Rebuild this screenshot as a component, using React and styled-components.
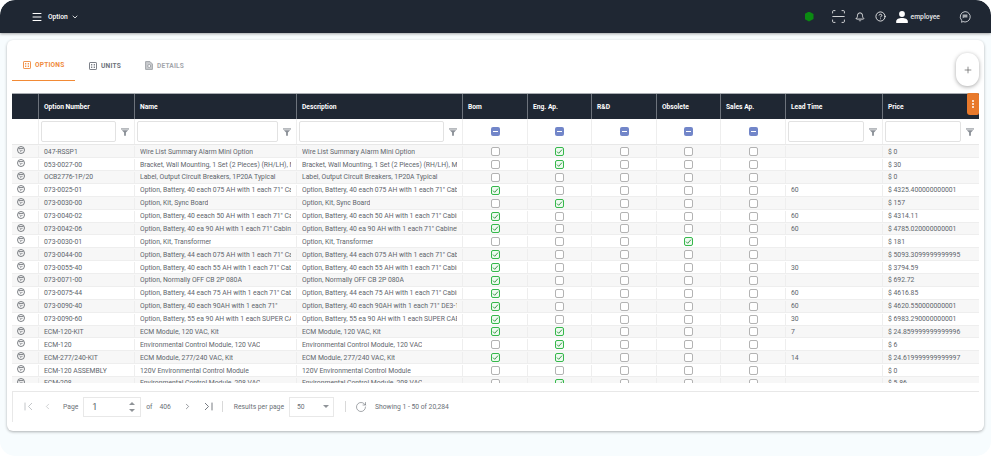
import styled, { createGlobalStyle } from "styled-components";
import { Bell, ChevronDown, ChevronLeft, ChevronRight, CircleHelp, Menu, Plus, RotateCw } from "lucide-react";

const COLUMNS = "26px 96px 162px 166px 65px 64px 65px 64px 65px 97px 97px";

const rows = [
    { num: "047-RSSP1", name: "Wire List Summary Alarm Mini Option", eng: true, price: "0" },
    { num: "053-0027-00", name: "Bracket, Wall Mounting, 1 Set (2 Pieces) (RH/LH), Mini", eng: true, price: "30" },
    { num: "OCB2776-1P/20", name: "Label, Output Circuit Breakers, 1P20A Typical", price: "0" },
    { num: "073-0025-01", name: 'Option, Battery, 40 each 075 AH with 1 each 71" Cabinet', bom: true, lead: "60", price: "4325.400000000001" },
    { num: "073-0030-00", name: "Option, Kit, Sync Board", eng: true, price: "157" },
    { num: "073-0040-02", name: 'Option, Battery, 40 eeach 50 AH with 1 each 71" Cabinet', desc: 'Option, Battery, 40 each 50 AH with 1 each 71" Cabinet', bom: true, lead: "60", price: "4314.11" },
    { num: "073-0042-06", name: 'Option, Battery, 40 ea 90 AH with 1 each 71" Cabinet', bom: true, lead: "60", price: "4785.020000000001" },
    { num: "073-0030-01", name: "Option, Kit, Transformer", obsolete: true, price: "181" },
    { num: "073-0044-00", name: 'Option, Battery, 44 each 075 AH with 1 each 71" Cabinet', bom: true, price: "5093.3099999999995" },
    { num: "073-0055-40", name: 'Option, Battery, 40 each 55 AH with 1 each 71" Cabinet', bom: true, lead: "30", price: "3794.59" },
    { num: "073-0071-00", name: "Option, Normally OFF CB 2P 080A", bom: true, price: "692.72" },
    { num: "073-0075-44", name: 'Option, Battery, 44 each 75 AH with 1 each 71" Cabinet', bom: true, lead: "60", price: "4616.85" },
    { num: "073-0090-40", name: 'Option, Battery, 40 each 90AH with 1 each 71"', desc: 'Option, Battery, 40 each 90AH with 1 each 71" DE3-1', bom: true, lead: "60", price: "4620.550000000001" },
    { num: "073-0090-60", name: 'Option, Battery, 55 ea 90 AH with 1 each SUPER CAB', bom: true, lead: "30", price: "6983.290000000001" },
    { num: "ECM-120-KIT", name: "ECM Module, 120 VAC, Kit", bom: true, eng: true, lead: "7", price: "24.859999999999996" },
    { num: "ECM-120", name: "Environmental Control Module, 120 VAC", eng: true, price: "6" },
    { num: "ECM-277/240-KIT", name: "ECM Module, 277/240 VAC, Kit", bom: true, eng: true, lead: "14", price: "24.619999999999997" },
    { num: "ECM-120 ASSEMBLY", name: "120V Environmental Control Module", price: "0" },
    { num: "ECM-208", name: "Environmental Control Module, 208 VAC", eng: true, price: "5.86" },
];

function ExpandIcon() {
    return (
        <svg width="8" height="8" viewBox="0 0 8 8" fill="none" stroke="#5a5f66" strokeWidth="0.8">
            <circle cx="4" cy="4" r="3.5" />
            <path d="M1.6 2.6h4.8M2.6 4l1.4 1.4L5.4 4" />
        </svg>
    );
}

function FunnelIcon() {
    return (
        <svg width="8" height="8" viewBox="0 0 8 8" fill="#8a8f96">
            <rect x="0" y="0.4" width="8" height="1.1" />
            <path d="M0.8 2.2h6.4L4.9 4.6V7.8H3.1V4.6z" />
        </svg>
    );
}

function BoxCheck({ on }) {
    return (
        <CheckBox $on={on}>
            {on && (
                <svg width="7" height="7" viewBox="0 0 7 7" fill="none" stroke="#2c8f3c" strokeWidth="0.9">
                    <path d="M1 3.6l1.7 1.7L6 1.6" />
                </svg>
            )}
        </CheckBox>
    );
}

function FilterField() {
    return (
        <FilterCell>
            <FilterInput />
            <FunnelIcon />
        </FilterCell>
    );
}

function MinusCell() {
    return (
        <BoxCell>
            <MinusBox />
        </BoxCell>
    );
}

function TabGridIcon({ color }) {
    return (
        <svg width="8" height="8" viewBox="0 0 8 8" fill="none" stroke={color} strokeWidth="0.9">
            <rect x="0.5" y="0.5" width="7" height="7" rx="0.6" />
            <path d="M2 2.5h1.3M2 4h1.3M2 5.5h1.3M4.7 2.5H6M4.7 4H6M4.7 5.5H6" />
        </svg>
    );
}

function DetailsIcon() {
    return (
        <svg width="8" height="9" viewBox="0 0 8 9" fill="none" stroke="#a3a6ab" strokeWidth="1">
            <path d="M0.6 8.4V0.6h4.4l2.4 2.4v5.4z" fill="#c9cbce" />
            <circle cx="4.2" cy="5" r="1.5" fill="#fff" />
        </svg>
    );
}

function ScanIcon() {
    return (
        <svg width="13" height="13" viewBox="0 0 13 13" fill="none" stroke="#fff" strokeWidth="0.8">
            <path d="M0.6 3.4V1.6a1 1 0 0 1 1-1h1.800M9.600 0.600h1.800a1 1 0 0 1 1 1v1.800M12.400 9.600v1.800a1 1 0 0 1-1 1H9.600M3.400 12.400H1.600a1 1 0 0 1-1-1V9.600M0.400 6.500h12.200" />
        </svg>
    );
}

function UserIcon() {
    return (
        <svg width="12" height="12" viewBox="0 0 12 12" fill="#fff">
            <circle cx="6" cy="3" r="2.9" />
            <path d="M0.2 12V10.4C0.2 8.2 3 7 6 7s5.800 1.200 5.800 3.400V12z" />
        </svg>
    );
}

function ChatIcon() {
    return (
        <svg width="12" height="12" viewBox="0 0 12 12" fill="none" stroke="#d5d8dc" strokeWidth="0.9">
            <path d="M6 0.600a5.200 5.200 0 1 1-2.200 9.900L2.700 11.500V9.400A5.200 5.200 0 0 1 6 0.600z" />
            <path d="M3.600 3.500h4.800v3H5.200L3.600 7.600z" fill="#a9adb3" stroke="none" />
        </svg>
    );
}

function FirstLastIcon({ last }) {
    return (
        <svg width="9" height="9" viewBox="0 0 9 9" fill="none" stroke={last ? "#555b63" : "#b4b7bb"} strokeWidth="0.8">
            {last ? <path d="M1 1l3.500 3.500L1 8M8 0.600v7.800" /> : <path d="M8 1L4.500 4.500 8 8M1 0.600v7.800" />}
        </svg>
    );
}

export default function App() {
    return (
        <>
            <GlobalStyle />
            <Page>
                <TopBar>
                    <Menu size={12} color="#fff" strokeWidth={2} />
                    <ModuleName>Option</ModuleName>
                    <ChevronDown size={8} color="#fff" strokeWidth={2.4} />
                    <TopActions>
                        <StatusDot />
                        <ScanSlot><ScanIcon /></ScanSlot>
                        <Bell size={10} color="#fff" strokeWidth={2} />
                        <CircleHelp size={11} color="#fff" strokeWidth={1.8} />
                        <UserSlot>
                            <UserIcon />
                            <UserName>employee</UserName>
                        </UserSlot>
                        <ChatIcon />
                    </TopActions>
                </TopBar>

                <Card>
                    <Tabs>
                        <Tab $active>
                            <TabGridIcon color="#ef8a3c" />
                            OPTIONS
                        </Tab>
                        <Tab $color="#6d727a">
                            <TabGridIcon color="#6d727a" />
                            UNITS
                        </Tab>
                        <Tab $color="#a3a6ab">
                            <DetailsIcon />
                            DETAILS
                        </Tab>
                    </Tabs>

                    <AddButton><Plus size={10} color="#555" strokeWidth={1.6} /></AddButton>

                    <Table>
                        <MenuButton>
                            <Dot /><Dot /><Dot />
                        </MenuButton>
                        <HeadRow>
                            <HeadCell />
                            <HeadCell>Option Number</HeadCell>
                            <HeadCell>Name</HeadCell>
                            <HeadCell>Description</HeadCell>
                            <HeadCell>Bom</HeadCell>
                            <HeadCell>Eng. Ap.</HeadCell>
                            <HeadCell>R&amp;D</HeadCell>
                            <HeadCell>Obsolete</HeadCell>
                            <HeadCell>Sales Ap.</HeadCell>
                            <HeadCell>Lead Time</HeadCell>
                            <HeadCell>Price</HeadCell>
                        </HeadRow>
                        <FilterRow>
                            <BoxCell />
                            <FilterField />
                            <FilterField />
                            <FilterField />
                            <MinusCell />
                            <MinusCell />
                            <MinusCell />
                            <MinusCell />
                            <MinusCell />
                            <FilterField />
                            <FilterField />
                        </FilterRow>
                        <Body>
                            {rows.map((row) => (
                                <Row key={row.num}>
                                    <ExpandCell><ExpandIcon /></ExpandCell>
                                    <TextCell>{row.num}</TextCell>
                                    <TextCell><Clip>{row.name}</Clip></TextCell>
                                    <TextCell><Clip>{row.desc || row.name}</Clip></TextCell>
                                    <BoxCell><BoxCheck on={row.bom} /></BoxCell>
                                    <BoxCell><BoxCheck on={row.eng} /></BoxCell>
                                    <BoxCell><BoxCheck /></BoxCell>
                                    <BoxCell><BoxCheck on={row.obsolete} /></BoxCell>
                                    <BoxCell><BoxCheck /></BoxCell>
                                    <TextCell>{row.lead}</TextCell>
                                    <TextCell>$ {row.price}</TextCell>
                                </Row>
                            ))}
                        </Body>
                    </Table>

                    <Pager>
                        <PagerItem $gap={11}><FirstLastIcon /></PagerItem>
                        <PagerItem $gap={10}><ChevronLeft size={9} color="#b4b7bb" strokeWidth={1.6} /></PagerItem>
                        <PagerItem $gap={11}>Page</PagerItem>
                        <PageInput $gap={5}>
                            1
                            <Spinner>
                                <ArrowUp />
                                <ArrowDown />
                            </Spinner>
                        </PageInput>
                        <PagerItem $gap={5}>of</PagerItem>
                        <PagerItem $gap={7}>406</PagerItem>
                        <PagerItem $gap={12}><ChevronRight size={9} color="#555b63" strokeWidth={1.6} /></PagerItem>
                        <PagerItem $gap={12}><FirstLastIcon last /></PagerItem>
                        <Divider $gap={9} />
                        <PagerItem $gap={11}>Results per page</PagerItem>
                        <SizeSelect $gap={5}>
                            50
                            <ArrowDown />
                        </SizeSelect>
                        <Divider $gap={11} />
                        <PagerItem $gap={9}><RotateCw size={12} color="#6a6f76" strokeWidth={1.2} /></PagerItem>
                        <PagerItem $gap={8}>Showing 1 - 50 of 20,284</PagerItem>
                    </Pager>
                </Card>
            </Page>
        </>
    );
}

const GlobalStyle = createGlobalStyle`
    html, body {
        margin: 0;
        background: #ffffff;
        font-family: Roboto, "Liberation Sans", sans-serif;
    }

    * {
        box-sizing: border-box;
    }
`;

const Page = styled.div`
    width: 991px;
    height: 456px;
    overflow: hidden;
    background: #f7fcfe;
    border-radius: 15px;
`;

const TopBar = styled.header`
    display: flex;
    align-items: center;
    height: 33px;
    padding: 0 20px 0 31px;
    background: #1f2733;
    border-radius: 15px 15px 0 0;
    box-shadow: 0 1px 3px rgba(0, 0, 0, 0.35);
`;

const ModuleName = styled.span`
    margin: 0 3px 0 5px;
    color: #ffffff;
    font-size: 6.700px;
    font-weight: 500;
`;

const TopActions = styled.div`
    display: flex;
    align-items: center;
    margin-left: auto;
    gap: 10px;
`;

const StatusDot = styled.span`
    width: 9px;
    height: 10px;
    margin-right: 8px;
    background: #0b8a12;
    clip-path: polygon(50% 0, 100% 25%, 100% 75%, 50% 100%, 0 75%, 0 25%);
`;

const ScanSlot = styled.span`
    display: flex;
`;

const UserSlot = styled.span`
    display: flex;
    align-items: center;
    gap: 3px;
    margin-right: 9px;
`;

const UserName = styled.span`
    color: #e6e8ea;
    font-size: 6.800px;
    font-weight: 500;
`;

const Card = styled.main`
    position: relative;
    width: 977px;
    height: 391px;
    margin: 7px 0 0 7px;
    padding: 10px 5px 0;
    background: #ffffff;
    border-radius: 6px;
    box-shadow: 0 1px 3px rgba(0, 0, 0, 0.3);
`;

const Tabs = styled.nav`
    display: flex;
    height: 31px;
`;

const Tab = styled.div`
    display: flex;
    align-items: center;
    gap: 4px;
    width: ${(p) => (p.$active ? "63px" : "auto")};
    padding: 0 10px 0 ${(p) => (p.$active ? "11px" : "14px")};
    color: ${(p) => (p.$active ? "#ef8a3c" : p.$color)};
    font-size: 6.600px;
    font-weight: 700;
    letter-spacing: 0.2px;
    border-bottom: ${(p) => (p.$active ? "1px solid #f28a35" : "none")};
`;

const AddButton = styled.button`
    position: absolute;
    top: 13px;
    right: 5px;
    display: flex;
    align-items: center;
    justify-content: center;
    width: 23px;
    height: 33px;
    padding: 0;
    background: #ffffff;
    border: none;
    border-radius: 11px;
    box-shadow: 0 1px 4px rgba(0, 0, 0, 0.35);
`;

const Table = styled.section`
    position: relative;
    width: 967px;
    margin-top: 12px;
    border-top: 1px solid #a9adb2;
`;

const MenuButton = styled.div`
    position: absolute;
    top: -1px;
    right: 0;
    z-index: 1;
    display: flex;
    flex-direction: column;
    align-items: center;
    justify-content: center;
    gap: 1px;
    width: 12px;
    height: 22px;
    background: #e8792b;
    border-radius: 2px 2px 2px 3px;
`;

const Dot = styled.span`
    width: 2px;
    height: 2px;
    background: #ffffff;
    border-radius: 50%;
`;

const HeadRow = styled.div`
    display: grid;
    grid-template-columns: ${COLUMNS};
    height: 25px;
    background: #1f2733;
`;

const HeadCell = styled.div`
    display: flex;
    align-items: center;
    padding-left: 5px;
    color: #ffffff;
    font-size: 6.700px;
    font-weight: 700;
    border-left: 1px solid #6d737c;

    &:first-child {
        border-left: none;
    }
`;

const FilterRow = styled.div`
    display: grid;
    grid-template-columns: ${COLUMNS};
    height: 26.300px;
    border-bottom: 1px solid #e8e8e8;
`;

const FilterCell = styled.div`
    display: flex;
    align-items: center;
    gap: 5px;
    padding: 0 5px 0 2px;
    border-left: 1px solid #eeeeee;
`;

const FilterInput = styled.input`
    flex: 1;
    min-width: 0;
    height: 21px;
    padding: 0;
    background: #ffffff;
    border: 1px solid #e2e2e2;
    border-radius: 2px;
`;

const MinusBox = styled.span`
    position: relative;
    width: 9px;
    height: 9px;
    background: #7286c9;
    border-radius: 2px;

    &::after {
        content: "";
        position: absolute;
        top: 4px;
        left: 2px;
        width: 5px;
        height: 1px;
        background: #ffffff;
    }
`;

const Body = styled.div`
    height: 238px;
    overflow: hidden;
`;

const Row = styled.div`
    display: grid;
    grid-template-columns: ${COLUMNS};
    height: 12.880px;
    padding-top: 1px;
    border-bottom: 1px solid #eeeeee;

    &:nth-child(odd) {
        background: #f7f7f7;
    }
`;

const ExpandCell = styled.div`
    display: flex;
    justify-content: center;
    padding-right: 8px;
`;

const TextCell = styled.div`
    display: flex;
    align-items: center;
    min-width: 0;
    padding: 0 5px;
    overflow: hidden;
    color: #60656c;
    font-size: 6.800px;
    white-space: nowrap;
    border-left: 1px solid #eeeeee;
`;

const Clip = styled.span`
    display: block;
    overflow: hidden;
`;

const BoxCell = styled.div`
    display: flex;
    align-items: center;
    justify-content: center;
    border-left: 1px solid #eeeeee;

    &:first-child {
        border-left: none;
    }
`;

const CheckBox = styled.span`
    display: flex;
    align-items: center;
    justify-content: center;
    width: 9px;
    height: 9px;
    background: ${(p) => (p.$on ? "#eefaf0" : "#ffffff")};
    border: 1px solid ${(p) => (p.$on ? "#35b84b" : "#b3b3b3")};
    border-radius: 2px;
`;

const Pager = styled.footer`
    display: flex;
    align-items: center;
    width: 967px;
    height: 31.300px;
    margin-top: 7.400px;
    border-top: 1px solid #e8e8e8;
    border-left: 1px solid #e8e8e8;
    color: #6a6f76;
    font-size: 6.750px;
`;

const PagerItem = styled.span`
    display: flex;
    align-items: center;
    margin-left: ${(p) => p.$gap}px;
`;

const PageInput = styled.div`
    display: flex;
    align-items: center;
    justify-content: space-between;
    width: 58px;
    height: 20px;
    margin-left: ${(p) => p.$gap}px;
    padding: 0 5px 0 8px;
    color: #555b63;
    font-size: 9px;
    border: 1px solid #e8e8e8;
`;

const Spinner = styled.span`
    display: flex;
    flex-direction: column;
    gap: 4px;
`;

const ArrowUp = styled.span`
    border-right: 3px solid transparent;
    border-bottom: 3px solid #8f9398;
    border-left: 3px solid transparent;
`;

const ArrowDown = styled.span`
    border-top: 3px solid #8f9398;
    border-right: 3px solid transparent;
    border-left: 3px solid transparent;
`;

const SizeSelect = styled.div`
    display: flex;
    align-items: center;
    justify-content: space-between;
    width: 45px;
    height: 20px;
    margin-left: ${(p) => p.$gap}px;
    padding: 0 4px 0 7px;
    border: 1px solid #e8e8e8;
`;

const Divider = styled.span`
    width: 1px;
    height: 11px;
    margin-left: ${(p) => p.$gap}px;
    background: #d9d9d9;
`;
